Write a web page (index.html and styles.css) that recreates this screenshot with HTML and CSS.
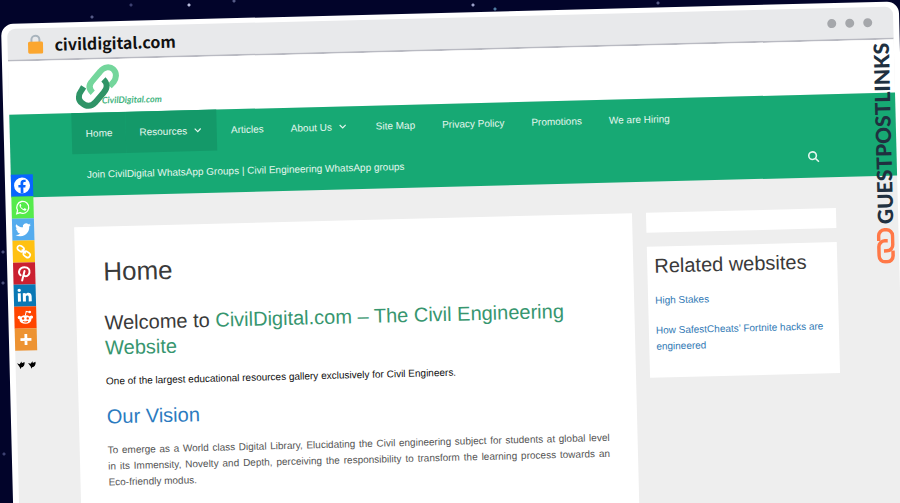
FILE: index.html
```html
<!DOCTYPE html>
<html lang="en">
<head>
  <meta charset="UTF-8" />
  <title>CivilDigital.com</title>
  <meta name="viewport" content="width=device-width, initial-scale=1.0" />
  <link rel="stylesheet" href="styles.css">
</head>
<body>

  <div class="browser">
    <div class="toolbar">
      <svg class="lock" viewBox="0 0 16 20" aria-hidden="true">
        <path d="M4 9V5.500a4 4 0 0 1 8 0V9" fill="none" stroke="#a9b4bd" stroke-width="2" />
        <rect x="0.500" y="7.500" width="15" height="12" rx="1.500" fill="#fba62f" />
      </svg>
      <span class="address">civildigital.com</span>
      <div class="dots"><i></i><i></i><i></i></div>
    </div>

    <div class="page">
      <header class="site-header">
        <a class="logo container" href="#">
          <svg viewBox="0 0 44 46" aria-hidden="true">
            <path d="M17 29C13 25 13 21 17 17L25 8C29 3 35 3 38 6C42 10 41 15 38 19L34 23" fill="none" stroke="#74d69c" stroke-width="6" />
            <path d="M8 23L6 26C2 31 2 36 6 39C10 43 15 43 19 39L28 29C32 25 32 20 28 16" fill="none" stroke="#2f9467" stroke-width="6" />
          </svg>
          <span>CivilDigital.com</span>
        </a>
      </header>

      <nav class="main-nav">
        <div class="container">
          <ul>
            <li class="current"><a href="#">Home</a></li>
            <li class="current"><a href="#">Resources <svg class="chevron" viewBox="0 0 8 6"><path d="M1 1.500l3 3 3-3" /></svg></a></li>
            <li><a href="#">Articles</a></li>
            <li><a href="#">About Us <svg class="chevron" viewBox="0 0 8 6"><path d="M1 1.500l3 3 3-3" /></svg></a></li>
            <li><a href="#">Site Map</a></li>
            <li><a href="#">Privacy Policy</a></li>
            <li><a href="#">Promotions</a></li>
            <li><a href="#">We are Hiring</a></li>
            <li class="join"><a href="#">Join CivilDigital WhatsApp Groups | Civil Engineering WhatsApp groups</a></li>
          </ul>
          <button class="search" type="button" aria-label="Search">
            <svg viewBox="0 0 12 12"><circle cx="5" cy="5" r="3.800" /><path d="M8 8l3.300 3.300" /></svg>
          </button>
        </div>
      </nav>

      <div class="content container">
        <main class="card article">
          <h1>Home</h1>
          <h2>Welcome to <span class="green">CivilDigital.com – The Civil Engineering Website</span></h2>
          <p class="lead">One of the largest educational resources gallery exclusively for Civil Engineers.</p>
          <h2 class="blue">Our Vision</h2>
          <p>To emerge as a World class Digital Library, Elucidating the Civil engineering subject for students at global level in&nbsp;its Immensity, Novelty and Depth, perceiving the responsibility to transform the learning process towards an <span class="nowrap">Eco-friendly</span> modus.</p>
        </main>

        <aside class="sidebar">
          <div class="card empty"></div>
          <div class="card related">
            <h2>Related websites</h2>
            <p><a href="#">High Stakes</a></p>
            <p><a href="#">How SafestCheats’ Fortnite hacks are engineered</a></p>
          </div>
        </aside>
      </div>
    </div>

    <div class="social">
      <a class="facebook" href="#" aria-label="Facebook">
        <svg viewBox="0 0 22 22"><circle cx="11" cy="11" r="8" fill="#fff" /><path d="M9.500 19v-6H7.300v-2.500h2.200V8.700c0-2.300 1.300-3.500 3.300-3.500l1.900.2v2.200h-1.100c-1.100 0-1.400.6-1.400 1.300v1.600h2.400l-.4 2.500h-2v6z" fill="#0866ff" /></svg>
      </a>
      <a class="whatsapp" href="#" aria-label="WhatsApp">
        <svg viewBox="0 0 22 22"><path d="M5 17l.9-3.200a6 6 0 1 1 2.300 2.300z" fill="none" stroke="#fff" stroke-width="1.300" /><path d="M8.500 7.500c-1.300 1-.4 3.100 1.300 4.800s3.700 2.500 4.700 1.300c.5-.7.200-1-.2-1.200l-1.400-.7c-.5-.2-.7.8-1.200.7-1.100-.4-2.200-1.400-2.500-2.400-.1-.4.700-.7.500-1.200l-.6-1.300c-.1-.3-.4-.2-.6 0z" fill="#fff" /></svg>
      </a>
      <a class="twitter" href="#" aria-label="Twitter">
        <svg viewBox="0 0 24 24"><path d="M20.500 7c-.6.300-1.300.5-2 .6.700-.5 1.300-1.200 1.500-2-.7.400-1.400.7-2.200.8a3.500 3.500 0 0 0-6 3.200C8.900 9.500 6.300 8.100 4.600 6a3.500 3.500 0 0 0 1.100 4.700c-.6 0-1.100-.2-1.600-.4 0 1.700 1.200 3.100 2.800 3.500-.5.100-1 .1-1.600 0 .5 1.400 1.700 2.400 3.300 2.400A7 7 0 0 1 3.500 17.700a9.900 9.900 0 0 0 15.200-8.800c.7-.5 1.300-1.100 1.800-1.900z" fill="#fff" /></svg>
      </a>
      <a class="copy" href="#" aria-label="Copy link">
        <svg viewBox="0 0 22 22"><g fill="none" stroke="#fff" stroke-width="1.700"><rect x="4.500" y="5.500" width="7" height="5" rx="2.500" transform="rotate(38 8 8)" /><rect x="10.500" y="11.500" width="7" height="5" rx="2.500" transform="rotate(38 14 14)" /><path d="M9 9l4 4" /></g></svg>
      </a>
      <a class="pinterest" href="#" aria-label="Pinterest">
        <svg viewBox="0 0 22 22"><path d="M7.300 12.600C4 9.300 6.600 4.800 11.200 4.800c4 0 5.700 2.700 5 5.600-.6 3-3.800 4.400-5.400 2.500M11.300 8.500L8.700 18" fill="none" stroke="#fff" stroke-width="2" stroke-linecap="round" /></svg>
      </a>
      <a class="linkedin" href="#" aria-label="LinkedIn">
        <svg viewBox="0 0 22 22"><circle cx="5.500" cy="5.700" r="1.700" fill="#fff" /><path d="M4 8.600h3V17H4zM9 8.600h2.800v1.200c1.500-2.300 6-2 6 2.200v5h-3v-4.500c0-2-2.800-2-2.800 0V17H9z" fill="#fff" /></svg>
      </a>
      <a class="reddit" href="#" aria-label="Reddit">
        <svg viewBox="0 0 22 22"><ellipse cx="11" cy="13" rx="6" ry="4.300" fill="#fff" /><circle cx="5" cy="10.800" r="1.700" fill="#fff" /><circle cx="17" cy="10.800" r="1.700" fill="#fff" /><path d="M11 9l1-4 3.500.8" fill="none" stroke="#fff" /><circle cx="15.500" cy="5.700" r="1.300" fill="#fff" /><circle cx="8.700" cy="12" r="1.200" fill="#ff4500" /><circle cx="13.300" cy="12" r="1.200" fill="#ff4500" /><path d="M8.500 14.800q2.500 1.600 5 0" fill="none" stroke="#ff4500" /></svg>
      </a>
      <a class="more" href="#" aria-label="More">
        <svg viewBox="0 0 22 22"><path d="M11 5.500v11M5.500 11h11" stroke="#fff" stroke-width="2.800" /></svg>
      </a>
      <svg class="arrows" viewBox="0 0 22 10" aria-hidden="true"><path id="arrow" d="M1.500 3.500l2.500 1L6 2l.3 1.700L9 2.500c.5 3-1 5-3.500 5.500l-1 1.500-.3-2z" /><use href="#arrow" x="11" /></svg>
    </div>

    <div class="watermark">
      <span>GUESTPOSTLINKS</span>
      <svg viewBox="0 0 18 36" aria-hidden="true">
        <g fill="none" stroke="#ff7847" stroke-width="3.500">
          <path d="M2 13V8a6 6 0 0 1 6-6h2a6 6 0 0 1 6 6v9a6 6 0 0 1-6 6H7" />
          <path d="M16 23v5a6 6 0 0 1-6 6H8a6 6 0 0 1-6-6v-9a6 6 0 0 1 6-6h3" />
        </g>
      </svg>
    </div>
  </div>

</body>
</html>
```

FILE: styles.css
```css
:root {
  --night: #02042a;
  --green: #17a974;
  --green-dark: #149969;
  --text: #3a3a3a;
  --link: #327ab5;
}

* {
  box-sizing: border-box;
}

body {
  height: 100vh;
  margin: 0;
  padding: 24px 1px 0;
  overflow: hidden;
  font-family: "Liberation Sans", Arial, sans-serif;
  font-size: 10px;
  line-height: 16px;
  color: var(--text);
  background-color: var(--night);
  background-image:
    radial-gradient(circle at 189px 5px, #b9bddd 1px, transparent 2px),
    radial-gradient(circle at 473px 5px, #9ba0c8 1px, transparent 2px),
    radial-gradient(circle at 495px 9px, #4f7ba0 1px, transparent 2px),
    radial-gradient(circle at 92px 17px, #555a86 1px, transparent 2px),
    radial-gradient(circle at 131px 5px, #3c4070 1px, transparent 2px),
    radial-gradient(circle at 234px 1px, #555a86 1px, transparent 2px),
    radial-gradient(circle at 658px 3px, #555a86 1px, transparent 2px),
    radial-gradient(circle at 3px 252px, #4a4f7c 1px, transparent 2px),
    radial-gradient(circle at 3px 283px, #4a4f7c 1px, transparent 2px),
    radial-gradient(circle at 4px 454px, #3c4070 1px, transparent 2px);
}

h1, h2, p, ul {
  margin: 0;
  padding: 0;
}

h1, h2 {
  font-weight: normal;
}

a {
  color: var(--link);
  text-decoration: none;
}

/* tilted browser window */
.browser {
  position: relative;
  min-height: 110vh;
  padding: 5px 6px;
  background: #fff;
  border-radius: 12px;
  transform: rotate(-1.44deg);
  transform-origin: 0 0;
}

.toolbar {
  display: flex;
  align-items: center;
  height: 33px;
  padding: 0 21px 0 20px;
  background: #e8e9eb;
  border-bottom: 2px solid #b9bac2;
  border-radius: 8px 8px 0 0;
}

.lock {
  width: 16px;
  height: 20px;
}

.address {
  margin-left: 11px;
  font-family: "Noto Sans CJK SC", "Noto Sans", sans-serif;
  font-size: 16px;
  font-weight: bold;
  color: #111;
}

.dots {
  display: flex;
  gap: 9px;
  margin-left: auto;
}

.dots i {
  width: 9px;
  height: 9px;
  border-radius: 50%;
  background: #a5a7ab;
}

.page {
  min-height: 110vh;
  background: #eee;
}

.container {
  max-width: 762px;
  margin: 0 auto;
}

.site-header {
  background: #fff;
}

.logo {
  display: flex;
  align-items: center;
  height: 53px;
  padding-left: 5px;
}

.logo svg {
  width: 44px;
  height: 46px;
}

.logo span {
  margin: 28px 0 0 -18px;
  font-family: Lato, sans-serif;
  font-size: 9px;
  font-weight: bold;
  font-style: italic;
  color: #43b480;
}

/* navigation */
.main-nav {
  padding-bottom: 1px;
  background: var(--green);
}

.main-nav .container {
  position: relative;
}

.main-nav ul {
  display: flex;
  flex-wrap: wrap;
  list-style: none;
}

.main-nav a {
  display: block;
  padding: 0 13px 0 14px;
  line-height: 41px;
  color: #e4f6ee;
}

.main-nav .current {
  background: var(--green-dark);
}

.main-nav .join {
  flex-basis: 100%;
}

.chevron {
  width: 8px;
  height: 6px;
  margin: 0 2px 0 4px;
  vertical-align: 1px;
}

.chevron path,
.search svg {
  fill: none;
  stroke: #e4f6ee;
  stroke-width: 1.2;
}

.search {
  position: absolute;
  right: 15px;
  bottom: 14px;
  width: 12px;
  height: 12px;
  padding: 0;
  border: none;
  background: none;
  cursor: pointer;
}

.search svg {
  display: block;
  stroke-width: 1.6;
}

/* content */
.content {
  display: flex;
  align-items: flex-start;
  gap: 14px;
  padding-top: 31px;
}

.card {
  background: #fff;
}

.article {
  flex: 1;
  min-height: 100vh;
  padding: 29px 28px;
}

.article h1 {
  margin-bottom: 23px;
  font-size: 26px;
  line-height: 32px;
}

.article h2 {
  margin-bottom: 13px;
  font-size: 20px;
  line-height: 25px;
}

.article p {
  text-align: justify;
  color: #555;
}

.article .lead {
  margin-bottom: 15px;
  color: #111;
}

.article .green {
  color: #37966f;
}

.article .blue {
  color: #2b7bc0;
}

.nowrap {
  white-space: nowrap;
}

.sidebar {
  display: grid;
  gap: 14px;
  width: 190px;
}

.empty {
  height: 20px;
}

.related {
  padding: 7px 7px 9px;
}

.related h2 {
  margin-bottom: 14px;
  font-size: 20px;
  line-height: 25px;
}

.related p {
  margin-bottom: 14px;
}

/* share buttons */
.social {
  position: absolute;
  top: 151px;
  left: 6px;
  width: 22px;
}

.social a,
.social svg {
  display: block;
}

.social a {
  height: 22px;
}

.facebook { background: #0866ff; }
.whatsapp { background: #55eb4c; }
.twitter { background: #55acee; }
.copy { background: #ffc112; }
.pinterest { background: #cb2030; }
.linkedin { background: #0a78b5; }
.reddit { background: #ff4500; }
.more { background: #ed9332; }

.arrows {
  width: 22px;
  height: 10px;
  margin-top: 9px;
}

.watermark {
  position: absolute;
  top: 41px;
  right: 9px;
  display: flex;
  flex-direction: column;
  align-items: center;
  gap: 4px;
}

.watermark span {
  font-family: Lato, sans-serif;
  font-size: 21px;
  font-weight: 900;
  line-height: 20px;
  color: #203040;
  writing-mode: vertical-rl;
  transform: rotate(180deg);
}

.watermark svg {
  width: 18px;
  height: 36px;
}
```
